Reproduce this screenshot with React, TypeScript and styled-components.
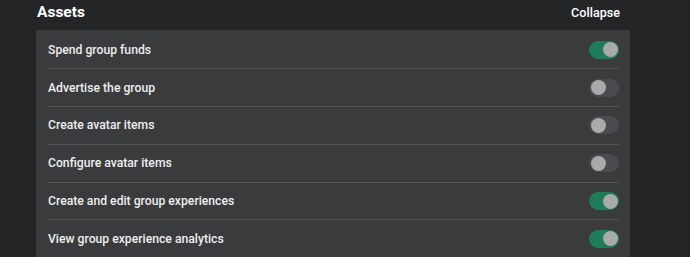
import React, { useState } from "react";
import styled, { createGlobalStyle } from "styled-components";

const Global = createGlobalStyle`
  html, body { margin: 0; padding: 0; background: #232527; }
  body { font-family: Roboto, "Noto Sans", sans-serif; }
`;

const Page = styled.div`
  width: 690px;
  height: 257px;
  box-sizing: border-box;
  padding: 0 60px 0 36px;
  overflow: hidden;
  background: #232527;
`;

const Header = styled.div`
  display: flex;
  align-items: center;
  justify-content: space-between;
  height: 24px;
  padding: 0 10px 0 1px;
  margin-bottom: 6px;
`;

const Title = styled.h2`
  margin: 0;
  font-size: 15.5px;
  font-weight: 700;
  color: #ffffff;
  line-height: 20px;
`;

const Collapse = styled.button`
  background: none;
  border: none;
  padding: 0;
  font-family: inherit;
  font-size: 12.6px;
  font-weight: 500;
  color: #ffffff;
  cursor: pointer;
`;

const Panel = styled.div`
  background: #393b3d;
  padding: 1.5px 11px 0 12px;
`;

const Row = styled.div<{ $last?: boolean }>`
  display: flex;
  align-items: center;
  justify-content: space-between;
  height: 36.8px;
  border-bottom: ${(p) => (p.$last ? "none" : "1px solid #545557")};
  font-size: 12.2px;
  font-weight: 500;
  color: #eeeeee;
`;

const Track = styled.button<{ $on: boolean }>`
  position: relative;
  width: 30px;
  height: 18px;
  border-radius: 9px;
  border: none;
  padding: 0;
  cursor: pointer;
  background: ${(p) => (p.$on ? "#1f7c58" : "#4a4b4e")};
`;

const Knob = styled.span<{ $on: boolean }>`
  position: absolute;
  top: 1.5px;
  left: ${(p) => (p.$on ? "13.5px" : "1.5px")};
  width: 15px;
  height: 15px;
  border-radius: 50%;
  background: #a9aaac;
`;

const items = [
  { label: "Spend group funds", on: true },
  { label: "Advertise the group", on: false },
  { label: "Create avatar items", on: false },
  { label: "Configure avatar items", on: false },
  { label: "Create and edit group experiences", on: true },
  { label: "View group experience analytics", on: true },
];

export default function App() {
  const [state, setState] = useState(items.map((i) => i.on));
  return (
    <Page>
      <Global />
      <Header>
        <Title>Assets</Title>
        <Collapse>Collapse</Collapse>
      </Header>
      <Panel>
        {items.map((it, i) => (
          <Row key={it.label} $last={i === items.length - 1}>
            <span>{it.label}</span>
            <Track
              $on={state[i]}
              onClick={() => setState((s) => s.map((v, j) => (j === i ? !v : v)))}
            >
              <Knob $on={state[i]} />
            </Track>
          </Row>
        ))}
      </Panel>
    </Page>
  );
}
